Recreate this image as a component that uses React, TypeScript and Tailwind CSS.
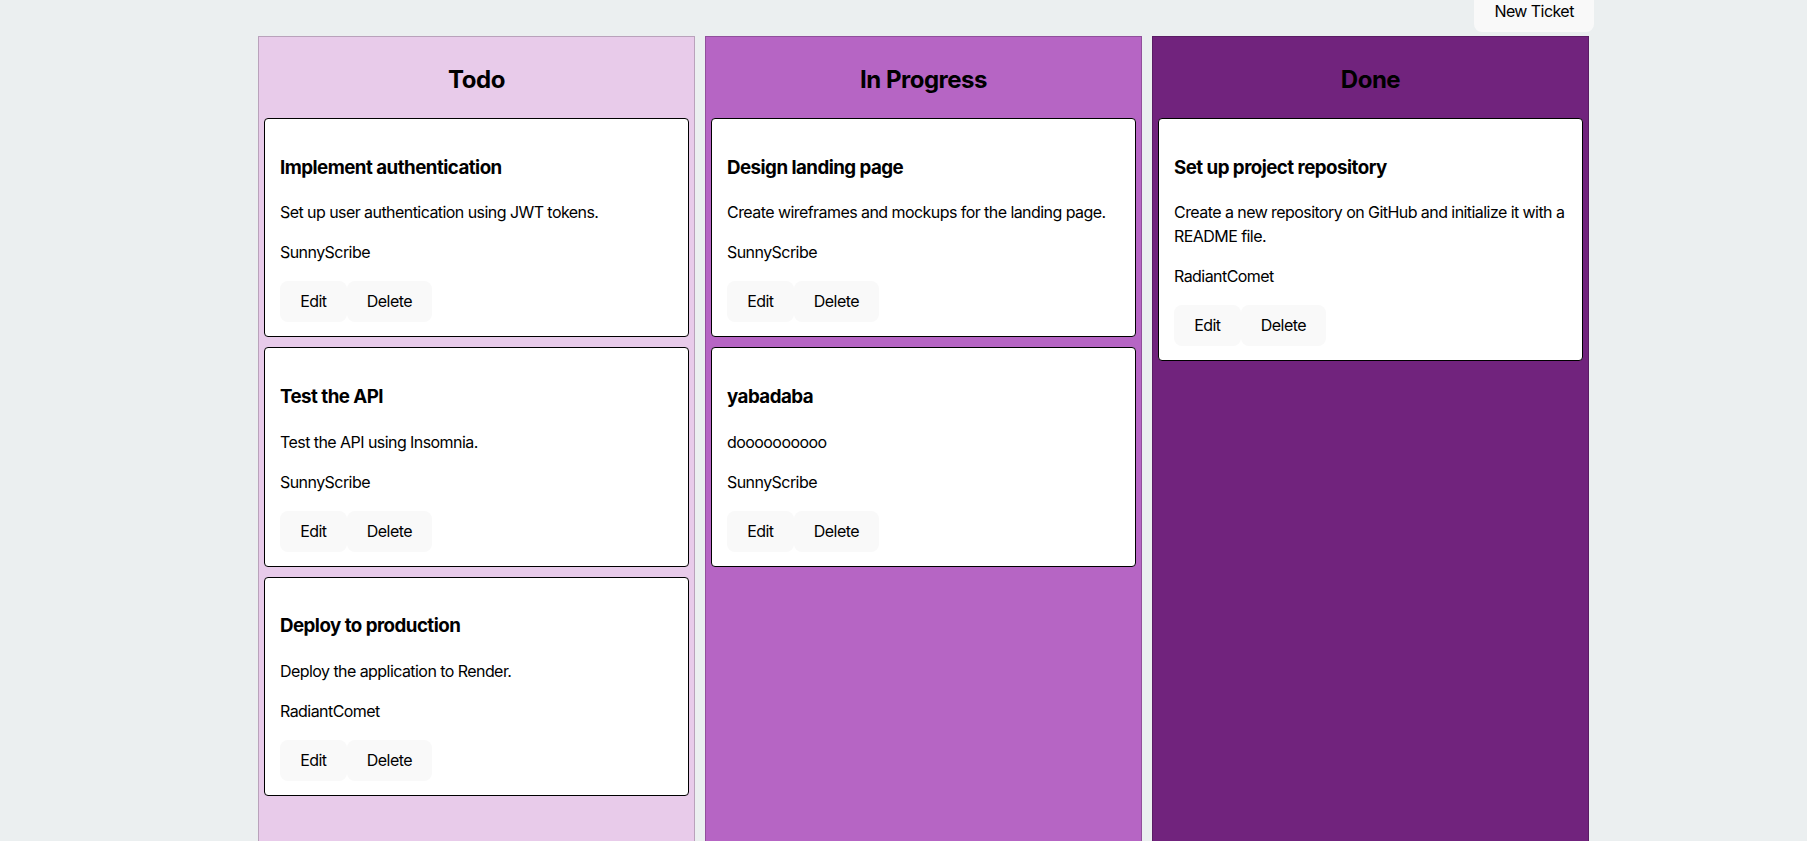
type Ticket = {
  title: string;
  description: string;
  assignee: string;
};

type Column = {
  name: string;
  bg: string;
  tickets: Ticket[];
};

const columns: Column[] = [
  {
    name: 'Todo',
    bg: 'bg-[#e8cbea]',
    tickets: [
      { title: 'Implement authentication', description: 'Set up user authentication using JWT tokens.', assignee: 'SunnyScribe' },
      { title: 'Test the API', description: 'Test the API using Insomnia.', assignee: 'SunnyScribe' },
      { title: 'Deploy to production', description: 'Deploy the application to Render.', assignee: 'RadiantComet' },
    ],
  },
  {
    name: 'In Progress',
    bg: 'bg-[#b665c4]',
    tickets: [
      { title: 'Design landing page', description: 'Create wireframes and mockups for the landing page.', assignee: 'SunnyScribe' },
      { title: 'yabadaba', description: 'doooooooooo', assignee: 'SunnyScribe' },
    ],
  },
  {
    name: 'Done',
    bg: 'bg-[#71237d]',
    tickets: [
      {
        title: 'Set up project repository',
        description: 'Create a new repository on GitHub and initialize it with a README file.',
        assignee: 'RadiantComet',
      },
    ],
  },
];

const Button = ({ label }: { label: string }) => (
  <button className="h-[41px] px-[19.2px] rounded-lg border border-transparent bg-[#f9f9f9] text-base font-normal leading-[19px] text-black">
    {label}
  </button>
);

const Card = ({ ticket }: { ticket: Ticket }) => (
  <div className="mb-[10px] rounded-[4px] border border-black bg-white px-[15px] pt-[16px] pb-[14px]">
    <h3 className="mt-[18.72px] mb-[18.72px] text-[18.72px] font-bold leading-[28px] tracking-[-0.028em] text-black">
      {ticket.title}
    </h3>
    <p className="text-base leading-6 text-black">{ticket.description}</p>
    <p className="mt-4 mb-[17px] text-base leading-6 text-black">{ticket.assignee}</p>
    <div className="flex">
      <Button label="Edit" />
      <Button label="Delete" />
    </div>
  </div>
);

export default function App() {
  return (
    <div className="min-h-screen overflow-hidden bg-[#ebeff0] font-['Inter',sans-serif] tracking-[-0.035em]">
      <div className="ml-[258px] w-[1336px]">
        {/* top bar */}
        <div className="-mt-[9px] flex justify-end">
          <Button label="New Ticket" />
        </div>

        {/* board */}
        <div className="mt-[4px] flex gap-[10px]">
          {columns.map((col) => (
            <div key={col.name} className={`h-[820px] w-[437px] border border-black/20 p-[5px] ${col.bg}`}>
              <h2 className="my-[19.92px] text-center text-2xl font-bold leading-9 tracking-[-0.02em] text-black">
                {col.name}
              </h2>
              {col.tickets.map((t) => (
                <Card key={t.title} ticket={t} />
              ))}
            </div>
          ))}
        </div>
      </div>
    </div>
  );
}
